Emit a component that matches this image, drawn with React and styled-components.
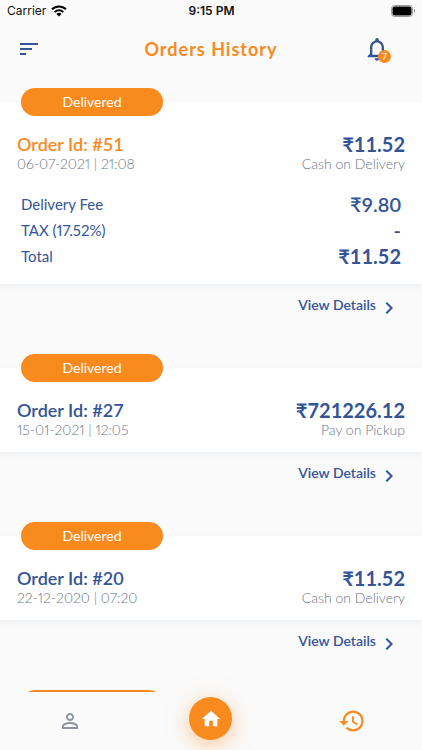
import React from "react"
import styled, { createGlobalStyle } from "styled-components"
import {
  MdChevronRight,
  MdHistory,
  MdHome,
  MdNotificationsNone,
  MdPersonOutline,
  MdSort,
} from "react-icons/md"

const PRIMARY = "#f98a1e"
const ACCENT = "#345498"
const MUTED = "#8c94a4"
const NOTE = "#6c7488"
const BACKGROUND = "#fafafa"

const GlobalStyle = createGlobalStyle`
  * {
    box-sizing: border-box;
  }
  body {
    margin: 0;
    background: ${BACKGROUND};
    font-family: Lato, "Open Sans", sans-serif;
    font-variant-numeric: proportional-nums;
    color: ${ACCENT};
  }
  button {
    border: 0;
    padding: 0;
    background: none;
    color: inherit;
    font: inherit;
    cursor: pointer;
  }
`

const Screen = styled.div`
  display: flex;
  flex-direction: column;
  height: 100vh;
`

const StatusBar = styled.div`
  display: grid;
  grid-template-columns: 1fr auto 1fr;
  align-items: center;
  height: 22px;
  padding: 0 6px 0 7px;
  font: 12px/22px Inter, Roboto, sans-serif;
  color: #111;
`
const Carrier = styled.span`
  display: flex;
  align-items: center;
  gap: 5px;
`
const Time = styled.span`
  font-weight: 600;
`
const Battery = styled.svg`
  justify-self: end;
`

const AppBar = styled.header`
  display: grid;
  grid-template-columns: 1fr auto 1fr;
  align-items: center;
  height: 54px;
  padding: 0 31px 0 17px;
`
const Title = styled.h1`
  margin: 0 0 0 14px;
  font-size: 18px;
  font-weight: 700;
  letter-spacing: 1px;
  color: ${PRIMARY};
`
const IconButton = styled.button`
  position: relative;
  display: flex;
  justify-self: ${({ $end }) => ($end ? "end" : "start")};
`
const Count = styled.span`
  position: absolute;
  right: 0;
  bottom: 0;
  width: 13px;
  height: 13px;
  border-radius: 50%;
  background: ${PRIMARY};
  color: #fff;
  font-size: 9px;
  line-height: 13px;
  text-align: center;
`

const List = styled.main`
  flex: 1;
  min-height: 0;
  overflow-y: auto;
  scrollbar-width: none;
  padding-top: 12px;
`
const Order = styled.article`
  padding-top: 14px;
`
const Card = styled.div`
  position: relative;
  min-height: 84px;
  padding: 30px 17px 14px;
  background: #fff;
  box-shadow: 0 2px 5px rgba(52, 84, 152, 0.08);
`
const Badge = styled.span`
  position: absolute;
  top: -14px;
  left: 21px;
  width: 142px;
  height: 28px;
  border-radius: 14px;
  background: ${PRIMARY};
  color: #fff;
  font-size: 14px;
  line-height: 28px;
  text-align: center;
`
const Line = styled.div`
  display: flex;
  justify-content: space-between;
  align-items: center;
`
const OrderId = styled.h2`
  margin: 0;
  font-size: 18px;
  font-weight: 600;
  font-variant-numeric: tabular-nums;
  line-height: 24px;
  color: ${({ $active }) => ($active ? PRIMARY : ACCENT)};
`
const Price = styled.span`
  font-size: 20px;
  font-weight: 700;
  font-variant-numeric: tabular-nums;
  line-height: 24px;
`
const Note = styled.span`
  font-size: 14px;
  font-weight: 300;
  line-height: 16px;
  color: ${NOTE};
`
const Fees = styled.dl`
  margin: 19px 4px 1px;
`
const Label = styled.dt`
  font-size: 15px;
  line-height: 26px;
`
const Amount = styled.dd`
  margin: 0;
  font-size: 20px;
  font-weight: ${({ $total }) => ($total ? 700 : 600)};
  font-variant-numeric: tabular-nums;
  line-height: 26px;
`
const Actions = styled.div`
  display: flex;
  justify-content: flex-end;
  height: 70px;
  padding: 12px 21px 0;
`
const Details = styled.button`
  display: flex;
  align-items: flex-start;
  align-self: flex-start;
  gap: 1px;
`
const DetailsText = styled.span`
  font-size: 14px;
  font-weight: 600;
  line-height: 18px;
`

const TabBar = styled.nav`
  display: grid;
  grid-template-columns: repeat(3, 1fr);
  align-items: center;
  justify-items: center;
  height: 58px;
`
const Tab = styled.button`
  display: flex;
  && {
    color: ${({ $active }) => ($active ? PRIMARY : MUTED)};
  }
`
const HomeTab = styled.button`
  display: flex;
  align-items: center;
  justify-content: center;
  width: 43px;
  height: 43px;
  margin-bottom: 5px;
  border-radius: 50%;
  && {
    background: ${PRIMARY};
    color: #fff;
  }
  box-shadow:
    0 5px 18px rgba(249, 138, 30, 0.4),
    0 2px 40px rgba(249, 138, 30, 0.08);
`

const orders = [
  {
    id: 51,
    date: "06-07-2021 | 21:08",
    price: "₹11.52",
    payment: "Cash on Delivery",
    fees: [
      { label: "Delivery Fee", amount: "₹9.80" },
      { label: "TAX (17.52%)", amount: "-" },
      { label: "Total", amount: "₹11.52", total: true },
    ],
  },
  {
    id: 27,
    date: "15-01-2021 | 12:05",
    price: "₹721226.12",
    payment: "Pay on Pickup",
  },
  {
    id: 20,
    date: "22-12-2020 | 07:20",
    price: "₹11.52",
    payment: "Cash on Delivery",
  },
]

const Wifi = () => (
  <svg width="16" height="12" viewBox="0 0 16 12" aria-hidden="true">
    <g fill="none" stroke="#000" strokeWidth="2">
      <path d="M1 4.3a10 10 0 0 1 14 0" />
      <path d="M3.7 7.1a6.2 6.2 0 0 1 8.6 0" />
    </g>
    <path d="M8 11.6 5.4 9a3.7 3.7 0 0 1 5.2 0z" />
  </svg>
)

const OrderItem = ({ order }) => (
  <Order>
    <Card>
      <Badge>Delivered</Badge>
      <Line>
        <OrderId $active={Boolean(order.fees)}>Order Id: #{order.id}</OrderId>
        <Price>{order.price}</Price>
      </Line>
      <Line>
        <Note>{order.date}</Note>
        <Note>{order.payment}</Note>
      </Line>
      {order.fees && (
        <Fees>
          {order.fees.map(({ label, amount, total }) => (
            <Line key={label}>
              <Label>{label}</Label>
              <Amount $total={total}>{amount}</Amount>
            </Line>
          ))}
        </Fees>
      )}
    </Card>
    <Actions>
      <Details type="button">
        <DetailsText>View Details</DetailsText>
        <MdChevronRight size={24} />
      </Details>
    </Actions>
  </Order>
)

const PendingOrder = () => (
  <Order aria-hidden="true">
    <Card>
      <Badge />
    </Card>
  </Order>
)

const App = () => (
  <Screen>
    <GlobalStyle />
    <StatusBar>
      <Carrier>
        Carrier
        <Wifi />
      </Carrier>
      <Time>9:15 PM</Time>
      <Battery width="25" height="12" viewBox="0 0 25 12" aria-hidden="true">
        <rect
          x="0.5"
          y="0.5"
          width="21"
          height="11"
          rx="3"
          fill="none"
          stroke="#999"
        />
        <rect x="1.5" y="1.5" width="19" height="9" rx="2" />
        <path d="M23 4v4c1.6-.6 1.6-3.4 0-4z" fill="#999" />
      </Battery>
    </StatusBar>
    <AppBar>
      <IconButton type="button" aria-label="Menu">
        <MdSort size={24} />
      </IconButton>
      <Title>Orders History</Title>
      <IconButton type="button" aria-label="Notifications" $end>
        <MdNotificationsNone size={28} />
        <Count>7</Count>
      </IconButton>
    </AppBar>
    <List>
      {orders.map((order) => (
        <OrderItem key={order.id} order={order} />
      ))}
      <PendingOrder />
    </List>
    <TabBar>
      <Tab type="button" aria-label="Profile">
        <MdPersonOutline size={24} />
      </Tab>
      <HomeTab type="button" aria-label="Home">
        <MdHome size={22} />
      </HomeTab>
      <Tab type="button" aria-label="Orders" $active>
        <MdHistory size={28} />
      </Tab>
    </TabBar>
  </Screen>
)

export default App
